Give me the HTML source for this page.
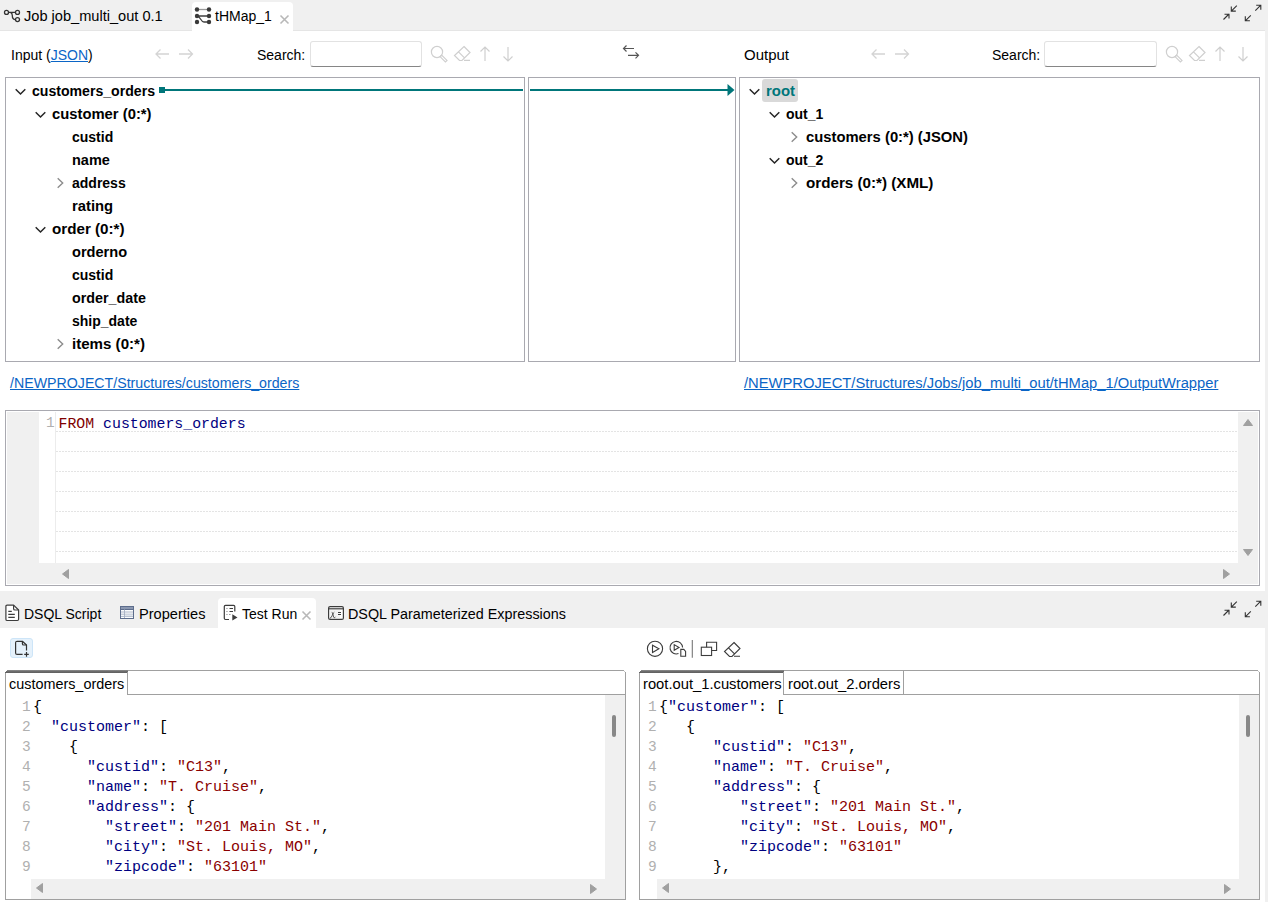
<!DOCTYPE html>
<html><head><meta charset="utf-8">
<style>
*{margin:0;padding:0;box-sizing:border-box}
html,body{width:1268px;height:902px;overflow:hidden;background:#fff;font-family:"Liberation Sans",sans-serif;font-size:14px;color:#000}
.a{position:absolute}
.t{position:absolute;white-space:pre;line-height:16px}
.b{font-weight:bold}
.m{position:absolute;white-space:pre;font-family:"Liberation Mono",monospace;font-size:15px;line-height:20px}
.lnk{color:#0b65c6;text-decoration:underline;text-underline-offset:1px}
svg{position:absolute;overflow:visible}
.k{color:#000080}.s{color:#8b0000}.ln{color:#b0b0b0}
</style></head><body>
<div class="a" style="left:1265px;top:0px;width:3px;height:902px;background:#f0f0f0"></div>
<div class="a" style="left:0px;top:0px;width:1268px;height:31px;background:#f0f0f0"></div>
<div class="a" style="left:0px;top:30px;width:1265px;height:1px;background:#e5e5e5"></div>
<div class="a" style="left:192px;top:2px;width:101px;height:29px;background:#fff;border-radius:4px 4px 0 0"></div>
<svg style="left:0px;top:4px" width="24" height="24" viewBox="0 0 24 24"><g fill="none" stroke="#333" stroke-width="1.3"><circle cx="6.5" cy="8.4" r="2"/><circle cx="17.5" cy="8.4" r="2"/><circle cx="17.5" cy="15.6" r="2"/><path d="M8.5 8.4H15.5M10.5 8.4C12 9 12.3 10 12.3 11.5C12.3 14 13.5 15.6 15.5 15.6"/></g></svg>
<div class="t" style="left:24px;top:8px;font-size:14.6px">Job job_multi_out 0.1</div>
<svg style="left:194px;top:7px" width="18" height="18" viewBox="0 0 18 18"><g fill="none" stroke-width="1.3"><path d="M3 2.5H15" stroke="#9a9a9a"/><path d="M3 9H15M3 9C6.5 9 6.5 15 10 15H15" stroke="#404040"/></g><g fill="#3a3a3a"><circle cx="3" cy="2.5" r="2.2"/><circle cx="15" cy="2.5" r="2.2"/><circle cx="3" cy="9" r="2.2"/><circle cx="15" cy="9" r="2.2"/><circle cx="3" cy="15" r="2.2"/><circle cx="15" cy="15" r="2.2"/></g></svg>
<div class="t" style="left:215px;top:8px;">tHMap_1</div>
<svg style="left:280px;top:15px" width="9" height="9" viewBox="0 0 9 9"><path d="M0.5 0.5L8.5 8.5M8.5 0.5L0.5 8.5" stroke="#b8b8b8" stroke-width="1.6"/></svg>
<svg style="left:1222px;top:5px" width="40" height="17" viewBox="0 0 40 17"><g fill="none" stroke="#333" stroke-width="1.1"><path d="M1.5 14.5L7 9M2.5 9.2H7V13.6"/><path d="M14.8 0.6L9.3 6.1M9.3 1.5V6.1H13.8"/><path d="M33.3 5.7L38.8 0.2M34.2 0.2H38.8V4.8"/><path d="M28.8 10.3L23.3 15.8M23.3 11.2V15.8H27.9"/></g></svg>
<div class="t" style="left:11px;top:47px;">Input (<span class="lnk">JSON</span>)</div>
<svg style="left:155px;top:49px" width="40" height="11" viewBox="0 0 40 11"><g fill="none" stroke="#d4d4d4" stroke-width="1.3"><path d="M1 5H14M5.5 0.5L1 5L5.5 9.5"/><path d="M24 5H37.5M33 0.5L37.5 5L33 9.5"/></g></svg>
<svg style="left:871px;top:49px" width="40" height="11" viewBox="0 0 40 11"><g fill="none" stroke="#d4d4d4" stroke-width="1.3"><path d="M1 5H14M5.5 0.5L1 5L5.5 9.5"/><path d="M24 5H37.5M33 0.5L37.5 5L33 9.5"/></g></svg>
<div class="t" style="left:257px;top:47px;">Search:</div>
<div class="a" style="left:310px;top:41px;width:112px;height:26px;border:1px solid #e2e2e2;border-bottom:1px solid #868686;border-radius:3px;background:#fff"></div>
<svg style="left:431px;top:46px" width="80" height="17" viewBox="0 0 80 17"><g fill="none" stroke="#cfcfcf" stroke-width="1.2"><circle cx="6" cy="6" r="5.6"/><path d="M9 10.6L10.6 9L16 14.4L14.4 16Z"/><path d="M33 0.5L39 6.5L31 14.5H28.5L23.5 9.5ZM27.5 5.8L33.5 11.8M33 14.3H39"/><path d="M54 1V15M49.5 5.5L54 1L58.5 5.5"/><path d="M77 1V15M72.5 10.5L77 15L81.5 10.5"/></g></svg>
<div class="t" style="left:992px;top:47px;">Search:</div>
<div class="a" style="left:1044px;top:41px;width:113px;height:26px;border:1px solid #e2e2e2;border-bottom:1px solid #868686;border-radius:3px;background:#fff"></div>
<svg style="left:1166px;top:46px" width="80" height="17" viewBox="0 0 80 17"><g fill="none" stroke="#cfcfcf" stroke-width="1.2"><circle cx="6" cy="6" r="5.6"/><path d="M9 10.6L10.6 9L16 14.4L14.4 16Z"/><path d="M33 0.5L39 6.5L31 14.5H28.5L23.5 9.5ZM27.5 5.8L33.5 11.8M33 14.3H39"/><path d="M54 1V15M49.5 5.5L54 1L58.5 5.5"/><path d="M77 1V15M72.5 10.5L77 15L81.5 10.5"/></g></svg>
<svg style="left:622px;top:44px" width="18" height="16" viewBox="0 0 18 16"><g fill="none" stroke="#555" stroke-width="1.2"><path d="M1.5 4.5H12M4.5 1.5L1.5 4.5L4.5 7.5"/><path d="M6 11.3H16.5M13.5 8.3L16.5 11.3L13.5 14.3"/></g></svg>
<div class="t" style="left:744px;top:47px;font-size:15px">Output</div>
<div class="a" style="left:5px;top:77px;width:520px;height:285px;border:1px solid #a9a9b0"></div>
<div class="a" style="left:528px;top:77px;width:208px;height:285px;border:1px solid #a9a9b0"></div>
<div class="a" style="left:739px;top:77px;width:521px;height:285px;border:1px solid #a9a9b0"></div>
<svg style="left:15px;top:88px" width="12" height="8" viewBox="0 0 12 8"><path d="M0.7 1.2L5.5 6L10.3 1.2" fill="none" stroke="#262626" stroke-width="1.5"/></svg>
<div class="t b" style="left:32px;top:83px;font-size:14.1px">customers_orders</div>
<svg style="left:35px;top:111px" width="12" height="8" viewBox="0 0 12 8"><path d="M0.7 1.2L5.5 6L10.3 1.2" fill="none" stroke="#262626" stroke-width="1.5"/></svg>
<div class="t b" style="left:52px;top:106px;font-size:14.8px">customer (0:*)</div>
<div class="t b" style="left:72px;top:129px;font-size:14px">custid</div>
<div class="t b" style="left:72px;top:152px;font-size:14.5px">name</div>
<svg style="left:57px;top:177px" width="8" height="12" viewBox="0 0 8 12"><path d="M0.7 1.2L5.7 6L0.7 10.8" fill="none" stroke="#8c8c8c" stroke-width="1.4"/></svg>
<div class="t b" style="left:72px;top:175px;font-size:14px">address</div>
<div class="t b" style="left:72px;top:198px;font-size:14.8px">rating</div>
<svg style="left:35px;top:226px" width="12" height="8" viewBox="0 0 12 8"><path d="M0.7 1.2L5.5 6L10.3 1.2" fill="none" stroke="#262626" stroke-width="1.5"/></svg>
<div class="t b" style="left:52px;top:221px;font-size:15.2px">order (0:*)</div>
<div class="t b" style="left:72px;top:244px;font-size:14.6px">orderno</div>
<div class="t b" style="left:72px;top:267px;font-size:14px">custid</div>
<div class="t b" style="left:72px;top:290px;font-size:14.3px">order_date</div>
<div class="t b" style="left:72px;top:313px;font-size:14px">ship_date</div>
<svg style="left:57px;top:338px" width="8" height="12" viewBox="0 0 8 12"><path d="M0.7 1.2L5.7 6L0.7 10.8" fill="none" stroke="#8c8c8c" stroke-width="1.4"/></svg>
<div class="t b" style="left:72px;top:336px;font-size:15.1px">items (0:*)</div>
<div class="a" style="left:159px;top:87px;width:6px;height:6px;background:#00767a"></div>
<div class="a" style="left:165px;top:89px;width:358px;height:2px;background:#00767a"></div>
<div class="a" style="left:530px;top:89px;width:199px;height:2px;background:#00767a"></div>
<svg style="left:727px;top:84px" width="8" height="12" viewBox="0 0 8 12"><path d="M0.5 0L7.5 6L0.5 12Z" fill="#00767a"/></svg>
<div class="a" style="left:762px;top:79px;width:36px;height:23px;background:#d9d9d9;border-radius:3px"></div>
<svg style="left:749px;top:88px" width="12" height="8" viewBox="0 0 12 8"><path d="M0.7 1.2L5.5 6L10.3 1.2" fill="none" stroke="#262626" stroke-width="1.5"/></svg>
<div class="t b" style="left:766px;top:83px;font-size:14.9px;color:#00767a">root</div>
<svg style="left:769px;top:111px" width="12" height="8" viewBox="0 0 12 8"><path d="M0.7 1.2L5.5 6L10.3 1.2" fill="none" stroke="#262626" stroke-width="1.5"/></svg>
<div class="t b" style="left:786px;top:106px;font-size:14px">out_1</div>
<svg style="left:791px;top:131px" width="8" height="12" viewBox="0 0 8 12"><path d="M0.7 1.2L5.7 6L0.7 10.8" fill="none" stroke="#8c8c8c" stroke-width="1.4"/></svg>
<div class="t b" style="left:806px;top:129px;font-size:14.8px">customers (0:*) (JSON)</div>
<svg style="left:769px;top:157px" width="12" height="8" viewBox="0 0 12 8"><path d="M0.7 1.2L5.5 6L10.3 1.2" fill="none" stroke="#262626" stroke-width="1.5"/></svg>
<div class="t b" style="left:786px;top:152px;font-size:14px">out_2</div>
<svg style="left:791px;top:177px" width="8" height="12" viewBox="0 0 8 12"><path d="M0.7 1.2L5.7 6L0.7 10.8" fill="none" stroke="#8c8c8c" stroke-width="1.4"/></svg>
<div class="t b" style="left:806px;top:175px;font-size:15.2px">orders (0:*) (XML)</div>
<div class="t lnk" style="left:10px;top:375px;font-size:14.2px">/NEWPROJECT/Structures/customers_orders</div>
<div class="t lnk" style="left:744px;top:375px;font-size:14.75px">/NEWPROJECT/Structures/Jobs/job_multi_out/tHMap_1/OutputWrapper</div>
<div class="a" style="left:5px;top:410px;width:1255px;height:176px;border:1px solid #a9a9b0"></div>
<div class="a" style="left:7px;top:412px;width:1251px;height:172px;background:#f0f0f0"></div>
<div class="a" style="left:39px;top:412px;width:1199px;height:151px;background:#fff"></div>
<div class="a" style="left:55px;top:412px;width:1px;height:151px;background:#ececec"></div>
<div class="a" style="left:56px;top:431px;width:1181px;height:1px;background:repeating-linear-gradient(90deg,#e4e4e4 0 2px,transparent 2px 3px)"></div>
<div class="a" style="left:56px;top:451px;width:1181px;height:1px;background:repeating-linear-gradient(90deg,#e4e4e4 0 2px,transparent 2px 3px)"></div>
<div class="a" style="left:56px;top:471px;width:1181px;height:1px;background:repeating-linear-gradient(90deg,#e4e4e4 0 2px,transparent 2px 3px)"></div>
<div class="a" style="left:56px;top:491px;width:1181px;height:1px;background:repeating-linear-gradient(90deg,#e4e4e4 0 2px,transparent 2px 3px)"></div>
<div class="a" style="left:56px;top:511px;width:1181px;height:1px;background:repeating-linear-gradient(90deg,#e4e4e4 0 2px,transparent 2px 3px)"></div>
<div class="a" style="left:56px;top:531px;width:1181px;height:1px;background:repeating-linear-gradient(90deg,#e4e4e4 0 2px,transparent 2px 3px)"></div>
<div class="a" style="left:56px;top:551px;width:1181px;height:1px;background:repeating-linear-gradient(90deg,#e4e4e4 0 2px,transparent 2px 3px)"></div>
<div class="m ln" style="left:46px;top:413px;font-size:14.5px">1</div>
<div class="m" style="left:58.5px;top:414px;font-size:14.85px"><span style="color:#800000">FROM</span> <span style="color:#000080">customers_orders</span></div>
<svg style="left:1243px;top:419px" width="10" height="7" viewBox="0 0 10 7"><path d="M5 0.5L9.5 6.5H0.5Z" fill="#a0a0a0" stroke="#a0a0a0" stroke-width="1" stroke-linejoin="round"/></svg>
<svg style="left:1243px;top:549px" width="10" height="7" viewBox="0 0 10 7"><path d="M0.5 0.5H9.5L5 6.5Z" fill="#a0a0a0" stroke="#a0a0a0" stroke-width="1" stroke-linejoin="round"/></svg>
<svg style="left:62px;top:569px" width="7" height="10" viewBox="0 0 7 10"><path d="M6.5 0.5V9.5L0.5 5Z" fill="#a0a0a0" stroke="#a0a0a0" stroke-width="1" stroke-linejoin="round"/></svg>
<svg style="left:1223px;top:569px" width="7" height="10" viewBox="0 0 7 10"><path d="M0.5 0.5V9.5L6.5 5Z" fill="#a0a0a0" stroke="#a0a0a0" stroke-width="1" stroke-linejoin="round"/></svg>
<div class="a" style="left:0px;top:591px;width:1265px;height:37px;background:#f0f0f0"></div>
<div class="a" style="left:218px;top:598px;width:98px;height:30px;background:#fff;border-radius:4px 4px 0 0"></div>
<svg style="left:5px;top:604px" width="15" height="17" viewBox="0 0 15 17"><g fill="none" stroke="#3c3c3c" stroke-width="1.2" stroke-linejoin="round"><path d="M1.8 1.1H8.6L13.6 6V15.3Q13.6 16.5 12.4 16.5H2.2Q0.9 16.5 0.9 15.2V2.3Q0.9 1.1 2.1 1.1Z" fill="#fff"/><path d="M8.6 1.1V4.7Q8.6 6 9.9 6H13.6"/><path d="M3.3 7.4H6.8M3.3 10.4H9.8M3.3 13.4H9.8"/></g></svg>
<div class="t" style="left:24px;top:606px;">DSQL Script</div>
<svg style="left:120px;top:606px" width="14" height="13" viewBox="0 0 14 13"><rect x="0.5" y="0.5" width="13" height="12" fill="#fbfcfd" stroke="#5d6d8c"/><rect x="1" y="1" width="12" height="2" fill="#8a97b0"/><path d="M1 3.5H13" stroke="#5d6d8c" stroke-width="1"/><path d="M4.5 3.5V12M1 6H13M1 8.2H13M1 10.4H13" stroke="#a6b0c3" stroke-width="0.9"/><rect x="5" y="8.6" width="7.6" height="1.5" fill="#dde2ea"/></svg>
<div class="t" style="left:139px;top:606px;font-size:14.6px">Properties</div>
<svg style="left:223px;top:604px" width="16" height="18" viewBox="0 0 16 18"><g fill="none" stroke="#3c3c3c" stroke-width="1.2" stroke-linejoin="round"><path d="M11.8 7.6V2.5Q11.8 1.3 10.6 1.3H2.5Q1.3 1.3 1.3 2.5V14.3Q1.3 15.5 2.5 15.5H6"/><path d="M6.5 4.5H10M6.5 7.5H10M6.5 10.5H7.3"/><path d="M3.3 4.5H4.6M3.3 7.5H4.6M3.3 10.5H4.6" stroke="#999"/></g><path d="M9.3 10.3V16.5L14.5 13.4Z" fill="#3c3c3c"/></svg>
<div class="t" style="left:242px;top:606px;">Test Run</div>
<svg style="left:302px;top:611px" width="9" height="9" viewBox="0 0 9 9"><path d="M0.5 0.5L8.5 8.5M8.5 0.5L0.5 8.5" stroke="#b8b8b8" stroke-width="1.6"/></svg>
<svg style="left:328px;top:606px" width="16" height="14" viewBox="0 0 16 14"><rect x="0.6" y="0.6" width="14.8" height="12.8" rx="1.5" fill="#fff" stroke="#3c3c3c" stroke-width="1.2"/><path d="M0.6 2.8H15.4" stroke="#3c3c3c" stroke-width="1.2"/><rect x="2" y="4" width="10" height="8" fill="#f3f3f3"/><path d="M10 6.5H13M10 8.5H13" stroke="#3c3c3c" stroke-width="1.1"/><path d="M1.8 12.2Q3 12.4 4.2 9.5Q5.3 6.5 6.3 6.2M3.7 6.4Q4.6 6 5 8.5Q5.5 12 6.3 11.8Q7.2 11.6 7.5 10.8" fill="none" stroke="#444" stroke-width="0.9"/></svg>
<div class="t" style="left:348px;top:606px;font-size:14.35px">DSQL Parameterized Expressions</div>
<svg style="left:1222px;top:601px" width="40" height="17" viewBox="0 0 40 17"><g fill="none" stroke="#333" stroke-width="1.1"><path d="M1.5 14.5L7 9M2.5 9.2H7V13.6"/><path d="M14.8 0.6L9.3 6.1M9.3 1.5V6.1H13.8"/><path d="M33.3 5.7L38.8 0.2M34.2 0.2H38.8V4.8"/><path d="M28.8 10.3L23.3 15.8M23.3 11.2V15.8H27.9"/></g></svg>
<div class="a" style="left:10px;top:638px;width:23px;height:20px;background:#e5f1fb;border:1px solid #cde5f8;border-radius:3px"></div>
<svg style="left:14px;top:641px" width="16" height="17" viewBox="0 0 16 17"><g fill="none" stroke="#333" stroke-width="1.2" stroke-linejoin="round"><path d="M8.6 13.4H3.1Q1.6 13.4 1.6 11.9V1.8Q1.6 0.3 3.1 0.3H8.4L12.5 4V9.5"/><path d="M8.4 0.3V2.7Q8.4 4 9.7 4H12.5"/><path d="M12.5 11.1V15.7M10.2 13.4H14.8"/></g></svg>
<svg style="left:646px;top:636px" width="100" height="24" viewBox="0 0 100 24"><g fill="none" stroke="#3c3c3c" stroke-width="1.1"><circle cx="9" cy="12.8" r="7.6"/><path d="M6.5 9.2V16.5L12.9 12.8Z"/><path d="M32.5 17.6A6.3 6.3 0 1 1 36.6 11.5" /><path d="M28.2 8.6V14.2L33 11.4Z"/><path d="M34.8 20.3V13.4H37.8L39.6 15.4V20.3Z"/><path d="M46.3 4V21.7" stroke="#777"/><path d="M60.6 11.2V6.2H70.6V14.5H65.6"/><rect x="55.3" y="11.2" width="10.3" height="8.3"/><path d="M88 6.5L94 12.5L86 20.5H83.5L78.5 15.5ZM82.5 11.8L88.5 17.8M88 20.3H94"/></g></svg>
<div class="a" style="left:5px;top:670px;width:621px;height:230px;border:1px solid #a0a0a0;border-top:none"></div>
<div class="a" style="left:5px;top:670px;width:621px;height:1px;background:#a0a0a0"></div>
<div class="a" style="left:5px;top:670px;width:123px;height:3px;background:linear-gradient(#8e8e8e,#6c6c6c 50%,#5e5e5e)"></div>
<div class="a" style="left:127px;top:672px;width:1px;height:23px;background:#a0a0a0"></div>
<div class="t" style="left:9px;top:676px;font-size:14.4px">customers_orders</div>
<div class="a" style="left:127px;top:694px;width:499px;height:1px;background:#a0a0a0"></div>
<div class="a" style="left:5px;top:670px;width:2px;height:1px;background:#fff"></div>
<div class="a" style="left:5px;top:671px;width:1px;height:1px;background:#fff"></div>
<div class="a" style="left:624px;top:670px;width:2px;height:1px;background:#fff"></div>
<div class="a" style="left:625px;top:671px;width:1px;height:1px;background:#fff"></div>
<div class="a" style="left:624px;top:671px;width:1px;height:1px;background:#c8c8c8"></div>
<div class="a" style="left:639px;top:670px;width:621px;height:230px;border:1px solid #a0a0a0;border-top:none"></div>
<div class="a" style="left:639px;top:670px;width:621px;height:1px;background:#a0a0a0"></div>
<div class="a" style="left:639px;top:670px;width:145px;height:3px;background:linear-gradient(#8e8e8e,#6c6c6c 50%,#5e5e5e)"></div>
<div class="a" style="left:783px;top:672px;width:1px;height:23px;background:#a0a0a0"></div>
<div class="t" style="left:643px;top:676px;font-size:14.75px">root.out_1.customers</div>
<div class="a" style="left:903px;top:670px;width:1px;height:25px;background:#a0a0a0"></div>
<div class="t" style="left:788px;top:676px;font-size:14.75px">root.out_2.orders</div>
<div class="a" style="left:783px;top:694px;width:477px;height:1px;background:#a0a0a0"></div>
<div class="a" style="left:639px;top:670px;width:2px;height:1px;background:#fff"></div>
<div class="a" style="left:639px;top:671px;width:1px;height:1px;background:#fff"></div>
<div class="a" style="left:1258px;top:670px;width:2px;height:1px;background:#fff"></div>
<div class="a" style="left:1259px;top:671px;width:1px;height:1px;background:#fff"></div>
<div class="a" style="left:1258px;top:671px;width:1px;height:1px;background:#c8c8c8"></div>
<div class="a" style="left:605px;top:695px;width:20px;height:204px;background:#f0f0f0"></div>
<div class="a" style="left:31px;top:879px;width:594px;height:20px;background:#f0f0f0"></div>
<div class="a" style="left:612px;top:715px;width:4px;height:22px;background:#888;border-radius:2px"></div>
<svg style="left:590px;top:884px" width="7" height="10" viewBox="0 0 7 10"><path d="M0.5 0.5V9.5L6.5 5Z" fill="#a0a0a0" stroke="#a0a0a0" stroke-width="1" stroke-linejoin="round"/></svg>
<svg style="left:36px;top:883px" width="7" height="10" viewBox="0 0 7 10"><path d="M6.5 0.5V9.5L0.5 5Z" fill="#a0a0a0" stroke="#a0a0a0" stroke-width="1" stroke-linejoin="round"/></svg>
<div class="m ln" style="left:22px;top:697px;font-size:14.5px">1</div>
<div class="m" style="left:33px;top:698px">{</div>
<div class="m ln" style="left:22px;top:717px;font-size:14.5px">2</div>
<div class="m" style="left:33px;top:718px">  <span class="k">"customer"</span>: [</div>
<div class="m ln" style="left:22px;top:737px;font-size:14.5px">3</div>
<div class="m" style="left:33px;top:738px">    {</div>
<div class="m ln" style="left:22px;top:757px;font-size:14.5px">4</div>
<div class="m" style="left:33px;top:758px">      <span class="k">"custid"</span>: <span class="s">"C13"</span>,</div>
<div class="m ln" style="left:22px;top:777px;font-size:14.5px">5</div>
<div class="m" style="left:33px;top:778px">      <span class="k">"name"</span>: <span class="s">"T. Cruise"</span>,</div>
<div class="m ln" style="left:22px;top:797px;font-size:14.5px">6</div>
<div class="m" style="left:33px;top:798px">      <span class="k">"address"</span>: {</div>
<div class="m ln" style="left:22px;top:817px;font-size:14.5px">7</div>
<div class="m" style="left:33px;top:818px">        <span class="k">"street"</span>: <span class="s">"201 Main St."</span>,</div>
<div class="m ln" style="left:22px;top:837px;font-size:14.5px">8</div>
<div class="m" style="left:33px;top:838px">        <span class="k">"city"</span>: <span class="s">"St. Louis, MO"</span>,</div>
<div class="m ln" style="left:22px;top:857px;font-size:14.5px">9</div>
<div class="m" style="left:33px;top:858px">        <span class="k">"zipcode"</span>: <span class="s">"63101"</span></div>
<div class="a" style="left:1239px;top:695px;width:20px;height:204px;background:#f0f0f0"></div>
<div class="a" style="left:657px;top:879px;width:602px;height:20px;background:#f0f0f0"></div>
<div class="a" style="left:1246px;top:715px;width:4px;height:22px;background:#888;border-radius:2px"></div>
<svg style="left:1224px;top:884px" width="7" height="10" viewBox="0 0 7 10"><path d="M0.5 0.5V9.5L6.5 5Z" fill="#a0a0a0" stroke="#a0a0a0" stroke-width="1" stroke-linejoin="round"/></svg>
<svg style="left:662px;top:883px" width="7" height="10" viewBox="0 0 7 10"><path d="M6.5 0.5V9.5L0.5 5Z" fill="#a0a0a0" stroke="#a0a0a0" stroke-width="1" stroke-linejoin="round"/></svg>
<div class="m ln" style="left:648px;top:697px;font-size:14.5px">1</div>
<div class="m" style="left:659px;top:698px">{<span class="k">"customer"</span>: [</div>
<div class="m ln" style="left:648px;top:717px;font-size:14.5px">2</div>
<div class="m" style="left:659px;top:718px">   {</div>
<div class="m ln" style="left:648px;top:737px;font-size:14.5px">3</div>
<div class="m" style="left:659px;top:738px">      <span class="k">"custid"</span>: <span class="s">"C13"</span>,</div>
<div class="m ln" style="left:648px;top:757px;font-size:14.5px">4</div>
<div class="m" style="left:659px;top:758px">      <span class="k">"name"</span>: <span class="s">"T. Cruise"</span>,</div>
<div class="m ln" style="left:648px;top:777px;font-size:14.5px">5</div>
<div class="m" style="left:659px;top:778px">      <span class="k">"address"</span>: {</div>
<div class="m ln" style="left:648px;top:797px;font-size:14.5px">6</div>
<div class="m" style="left:659px;top:798px">         <span class="k">"street"</span>: <span class="s">"201 Main St."</span>,</div>
<div class="m ln" style="left:648px;top:817px;font-size:14.5px">7</div>
<div class="m" style="left:659px;top:818px">         <span class="k">"city"</span>: <span class="s">"St. Louis, MO"</span>,</div>
<div class="m ln" style="left:648px;top:837px;font-size:14.5px">8</div>
<div class="m" style="left:659px;top:838px">         <span class="k">"zipcode"</span>: <span class="s">"63101"</span></div>
<div class="m ln" style="left:648px;top:857px;font-size:14.5px">9</div>
<div class="m" style="left:659px;top:858px">      },</div>
</body></html>
